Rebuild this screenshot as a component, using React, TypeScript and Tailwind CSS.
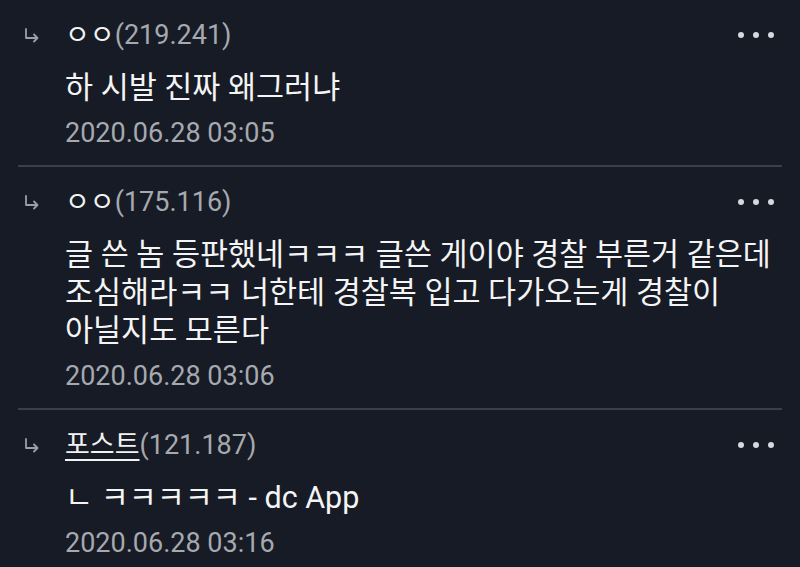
import React from 'react'

interface Comment {
  name: string
  ip: string
  body: string
  date: string
  underline?: boolean
}

const comments: Comment[] = [
  { name: 'ㅇㅇ', ip: '(219.241)', body: '하 시발 진짜 왜그러냐', date: '2020.06.28 03:05' },
  {
    name: 'ㅇㅇ',
    ip: '(175.116)',
    body: '글 쓴 놈 등판했네ㅋㅋㅋ 글쓴 게이야 경찰 부른거 같은데 조심해라ㅋㅋ 너한테 경찰복 입고 다가오는게 경찰이 아닐지도 모른다',
    date: '2020.06.28 03:06',
  },
  { name: '포스트', ip: '(121.187)', body: 'ㄴ ㅋㅋㅋㅋㅋ - dc App', date: '2020.06.28 03:16', underline: true },
]

const ReplyArrow = () => (
  <svg width="18" height="18" viewBox="0 0 18 18" fill="none" stroke="#9ba0a8" strokeWidth="1.8" strokeLinecap="round" strokeLinejoin="round">
    <path d="M3 3v9h11" />
    <path d="M11 8.5l3.5 3.5-3.5 3.5" />
  </svg>
)

const MoreDots = () => (
  <div className="flex items-center gap-[9px] pr-[20px]">
    <span className="block w-[6px] h-[6px] rounded-full bg-[#d6d8dc]" />
    <span className="block w-[6px] h-[6px] rounded-full bg-[#d6d8dc]" />
    <span className="block w-[6px] h-[6px] rounded-full bg-[#d6d8dc]" />
  </div>
)

function CommentRow({ c, last }: { c: Comment; last: boolean }) {
  return (
    <div>
      <div className="flex pt-[17px] pb-[14px]">
        <div className="w-[65px] shrink-0 pl-[23px] pt-[9px]">
          <ReplyArrow />
        </div>
        <div className="flex-1 pr-[6px]">
          <div className="flex items-center justify-between h-[36px]">
            <div className="text-[27px] leading-[36px]">
              <span className={c.underline ? 'text-[#f2f2f2] underline underline-offset-[5px] decoration-[2px]' : 'text-[#f2f2f2]'}>
                {c.name}
              </span>
              <span className="text-[#a6a9ae]">{c.ip}</span>
            </div>
            <MoreDots />
          </div>
          <p className="mt-[16px] text-[30.5px] leading-[38px] text-[#f4f4f4] break-keep">{c.body}</p>
          <div className="mt-[8px] text-[27px] leading-[36px] text-[#a6a9ae]">{c.date}</div>
        </div>
      </div>
      {!last && <div className="mx-[18px] h-[2px] bg-[#3a3f4b]" />}
    </div>
  )
}

export default function App() {
  return (
    <div
      className="w-[800px] h-[567px] overflow-hidden bg-[#161b26]"
      style={{ fontFamily: 'Roboto, "Noto Sans CJK KR", sans-serif' }}
    >
      {comments.map((c, i) => (
        <CommentRow key={i} c={c} last={i === comments.length - 1} />
      ))}
    </div>
  )
}
